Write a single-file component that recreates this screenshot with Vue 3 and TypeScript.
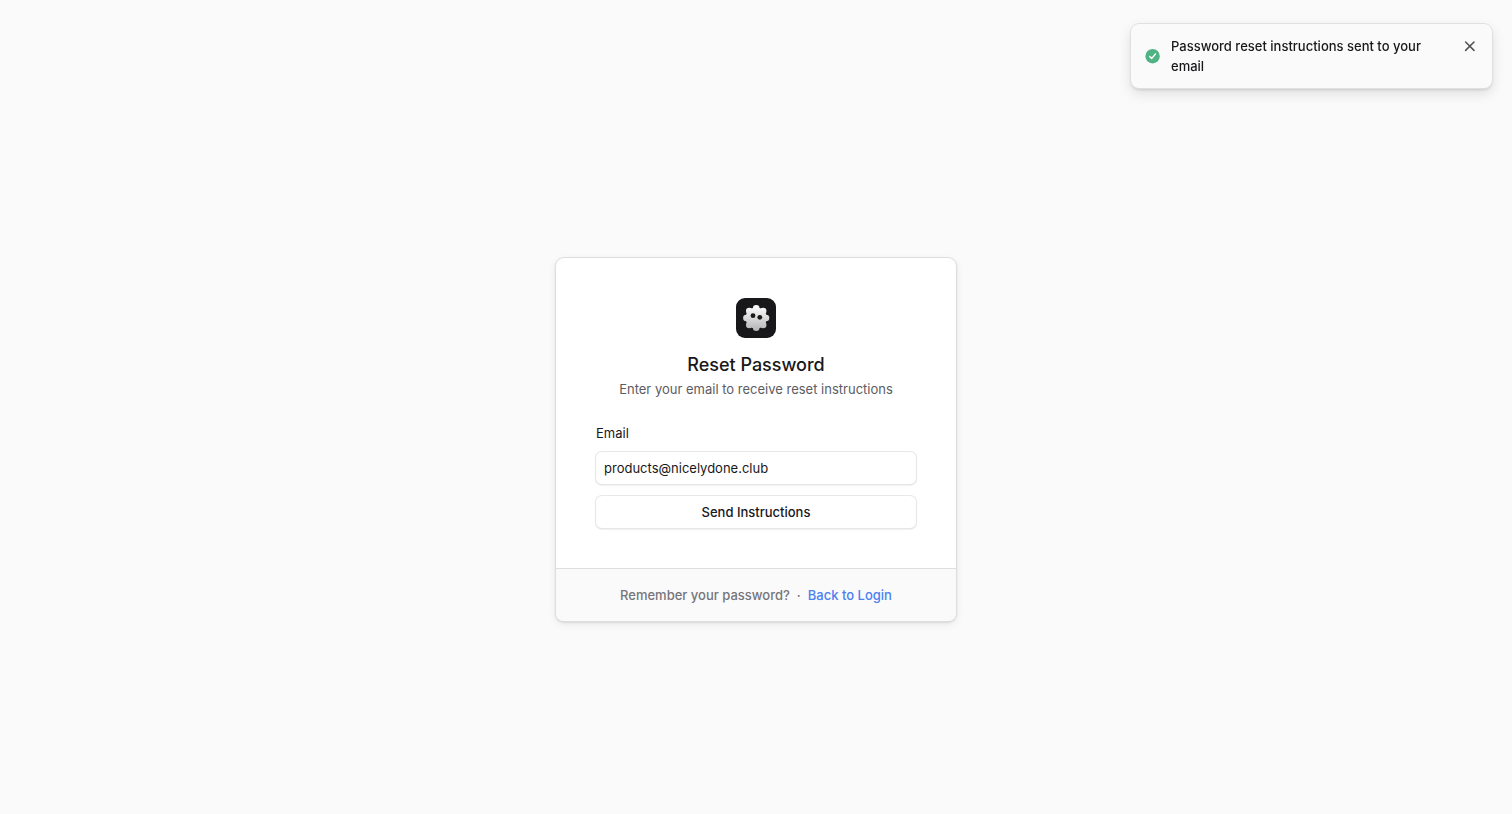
<script setup lang="ts">
import { ref } from 'vue'

const email = ref<string>('products@nicelydone.club')
const toastVisible = ref<boolean>(true)

const petals = Array.from({ length: 8 }, (_, i) => {
  const angle = (i * Math.PI) / 4
  return {
    cx: +(20.2 + 9.8 * Math.cos(angle)).toFixed(2),
    cy: +(20 + 9.8 * Math.sin(angle)).toFixed(2),
  }
})

function sendInstructions(): void {
  toastVisible.value = true
}
</script>

<template>
  <div class="page">
    <main class="card">
      <div class="body">
        <svg class="logo" viewBox="0 0 40 40" aria-hidden="true">
          <defs>
            <linearGradient id="petal-fill" gradientUnits="userSpaceOnUse" x1="20" y1="7" x2="20" y2="33">
              <stop offset="0" stop-color="#ffffff" />
              <stop offset="1" stop-color="#b4b4b6" />
            </linearGradient>
          </defs>
          <rect width="40" height="40" rx="9" fill="#18181a" />
          <g fill="url(#petal-fill)">
            <circle cx="20.2" cy="20" r="10.6" />
            <circle v-for="(p, i) in petals" :key="i" :cx="p.cx" :cy="p.cy" r="3.3" />
          </g>
          <circle cx="17" cy="17.7" r="2.4" fill="#18181a" />
          <circle cx="23.8" cy="19.3" r="2.4" fill="#18181a" />
        </svg>
        <h1 class="title">Reset Password</h1>
        <p class="subtitle">Enter your email to receive reset instructions</p>
        <form class="form" @submit.prevent="sendInstructions">
          <label class="label" for="email">Email</label>
          <input id="email" v-model="email" class="field" type="email" />
          <button class="submit" type="submit">Send Instructions</button>
        </form>
      </div>
      <footer class="footer">
        <span>Remember your password?</span>
        <span>·</span>
        <a class="link" href="#login">Back to Login</a>
      </footer>
    </main>

    <div v-if="toastVisible" class="toast" role="status">
      <svg class="check" viewBox="0 0 16 16" aria-hidden="true">
        <circle cx="7.6" cy="8.2" r="7.2" fill="#51b384" />
        <path d="M4.7 8.5 6.7 10.5 10.5 5.9" fill="none" stroke="#fff" stroke-width="1.4" stroke-linecap="round" stroke-linejoin="round" />
      </svg>
      <p class="message">Password reset instructions sent to your email</p>
      <button class="close" type="button" aria-label="Close" @click="toastVisible = false">
        <svg viewBox="0 0 20 20" aria-hidden="true">
          <path d="M5.6 6 14 14.4 M14 6 5.6 14.4" fill="none" stroke="#505055" stroke-width="1.5" stroke-linecap="round" />
        </svg>
      </button>
    </div>
  </div>
</template>

<style>
body {
  margin: 0;
  background: #fafafa;
}
</style>

<style scoped>
.page {
  box-sizing: border-box;
  min-height: 100vh;
  padding: 65px 20px 0;
  display: flex;
  align-items: center;
  justify-content: center;
  background: #fafafa;
  color: #18181b;
  font-family: Inter, "Liberation Sans", sans-serif;
  font-size: 13px;
  line-height: 20px;
}

.card {
  box-sizing: border-box;
  width: 100%;
  max-width: 402px;
  border: 1px solid #dededf;
  border-radius: 9px;
  background: #fff;
  overflow: hidden;
  box-shadow: 0 1px 2px rgba(0, 0, 0, 0.1), 0 3px 8px rgba(0, 0, 0, 0.06);
}

.body {
  padding: 40px;
  display: flex;
  flex-direction: column;
  align-items: center;
}

.logo {
  width: 40px;
  height: 40px;
  margin-bottom: 13px;
}

.title {
  margin: 0;
  font-size: 18px;
  line-height: 28px;
  font-weight: 500;
}

.subtitle {
  margin: 0;
  color: #5c5c63;
}

.form {
  width: 100%;
  margin-top: 24px;
  display: flex;
  flex-direction: column;
}

.label {
  margin-bottom: 9px;
}

.field,
.submit {
  box-sizing: border-box;
  width: 100%;
  height: 32px;
  padding: 0 8px;
  border: 0;
  border-radius: 6px;
  background: #fff;
  color: inherit;
  font: inherit;
  box-shadow: 0 0 0 1px #e7e7e8, 0 1px 2px rgba(0, 0, 0, 0.2);
}

.submit {
  margin-top: 12px;
  font-weight: 500;
}

.footer {
  padding: 16px;
  display: flex;
  justify-content: center;
  gap: 7px;
  border-top: 1px solid #dededf;
  background: #fafafa;
  color: #75757b;
  font-weight: 500;
}

.link {
  color: #4c80f1;
  text-decoration: none;
}

.toast {
  position: fixed;
  top: 24px;
  right: 20px;
  box-sizing: border-box;
  width: 361px;
  max-width: calc(100% - 40px);
  padding: 12px;
  display: flex;
  align-items: center;
  gap: 10px;
  border-radius: 8px;
  background: #fafafa;
  box-shadow: 0 0 0 1px #e0e0e1, 0 2px 3px rgba(0, 0, 0, 0.12), 0 5px 14px rgba(0, 0, 0, 0.12);
}

.check {
  flex: none;
  width: 16px;
  height: 16px;
  margin-left: 2px;
}

.message {
  flex: 1;
  margin: 0;
  padding-right: 16px;
  font-weight: 500;
}

.close {
  flex: none;
  align-self: flex-start;
  width: 20px;
  height: 20px;
  padding: 0;
  border: 0;
  background: none;
}

.close svg {
  display: block;
  width: 20px;
  height: 20px;
}
</style>
